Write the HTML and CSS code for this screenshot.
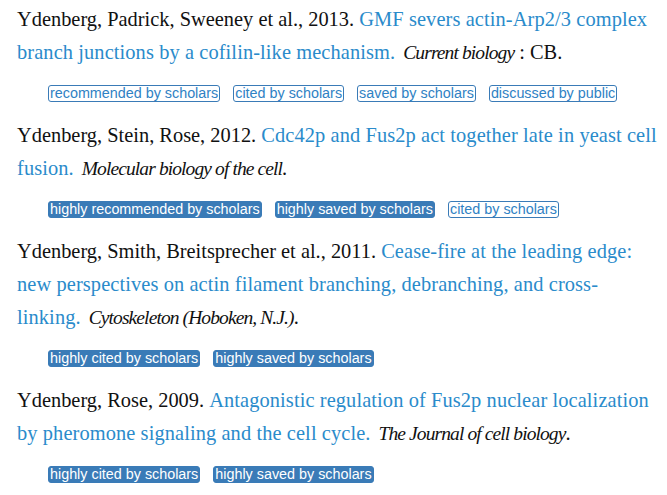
FILE: index.html
```html
<!DOCTYPE html>
<html>
<head>
<meta charset="utf-8">
<link rel="stylesheet" href="styles.css">
</head>
<body>
<div class="pubs">
  <div class="pub">
    <p class="cite">Ydenberg, Padrick, Sweeney et al., 2013. <a class="title" href="#">GMF severs actin-Arp2/3 complex branch junctions by a cofilin-like mechanism.</a><span class="journal"><i>Current biology</i> : CB.</span></p>
    <div class="badges">
      <span class="badge outline">recommended by scholars</span>
      <span class="badge outline">cited by scholars</span>
      <span class="badge outline">saved by scholars</span>
      <span class="badge outline">discussed by public</span>
    </div>
  </div>
  <div class="pub">
    <p class="cite">Ydenberg, Stein, Rose, 2012. <a class="title" href="#">Cdc42p and Fus2p act together late in yeast cell fusion.</a><span class="journal"><i>Molecular biology of the cell</i>.</span></p>
    <div class="badges">
      <span class="badge solid">highly recommended by scholars</span>
      <span class="badge solid">highly saved by scholars</span>
      <span class="badge outline">cited by scholars</span>
    </div>
  </div>
  <div class="pub">
    <p class="cite">Ydenberg, Smith, Breitsprecher et al., 2011. <a class="title" href="#">Cease-fire at the leading edge: new perspectives on actin filament branching, debranching, and cross-linking.</a><span class="journal"><i>Cytoskeleton (Hoboken, N.J.)</i>.</span></p>
    <div class="badges">
      <span class="badge solid">highly cited by scholars</span>
      <span class="badge solid">highly saved by scholars</span>
    </div>
  </div>
  <div class="pub">
    <p class="cite">Ydenberg, Rose, 2009. <a class="title" href="#">Antagonistic regulation of Fus2p nuclear localization by pheromone signaling and the cell cycle.</a><span class="journal"><i>The Journal of cell biology</i>.</span></p>
    <div class="badges">
      <span class="badge solid">highly cited by scholars</span>
      <span class="badge solid">highly saved by scholars</span>
    </div>
  </div>
</div>
</body>
</html>
```
FILE: styles.css
```css
html, body {
  margin: 0;
  padding: 0;
  background: #fff;
}
.pubs {
  padding: 3px 0 0 17px;
  width: 645px;
  display: flex;
  flex-direction: column;
  gap: 17px;
}
.cite {
  margin: 0;
  font-family: "Liberation Serif", "Times New Roman", serif;
  font-size: 20.4px;
  line-height: 33px;
  color: #111;
}
.title {
  color: #2a8bcb;
  text-decoration: none;
  letter-spacing: 0.1px;
}
.journal {
  margin-left: 8px;
}
.journal i {
  font-style: italic;
  font-size: 19.5px;
  letter-spacing: -0.9px;
}
.badges {
  display: flex;
  gap: 13px;
  padding-left: 31px;
  margin-top: 16px;
}
.badge {
  font-family: "Liberation Sans", Arial, sans-serif;
  font-size: 14.35px;
  line-height: 15px;
  padding: 0 1px;
  border-radius: 3px;
  border: 1px solid #3a7bb7;
  white-space: nowrap;
}
.badge.outline {
  color: #2f82c4;
  background: #fff;
}
.badge.solid {
  color: #fff;
  background: #3a7bb7;
}
```
